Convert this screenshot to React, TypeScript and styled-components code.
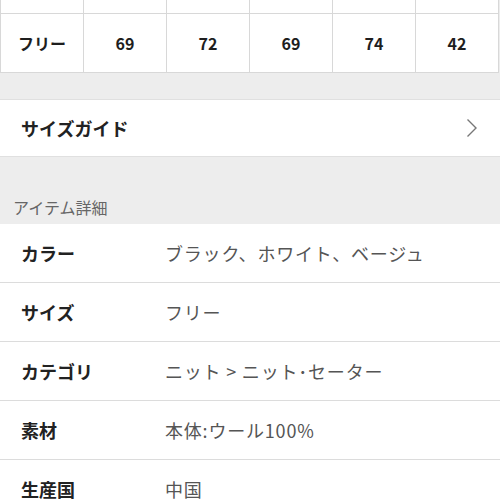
import React from 'react';
import styled, { createGlobalStyle } from 'styled-components';

const GlobalStyle = createGlobalStyle`
  html, body {
    margin: 0;
    padding: 0;
    background: #ededed;
    font-family: "Noto Sans CJK JP", "Noto Sans", sans-serif;
    -webkit-font-smoothing: antialiased;
  }
`;

const StyledPage = styled.div`
  width: 500px;
  height: 500px;
  overflow: hidden;
  background: #ededed;
  display: flex;
  flex-direction: column;
`;

const StyledSizeTable = styled.div`
  display: grid;
  grid-template-columns: repeat(6, 1fr);
  width: 498px;
  background: #fff;
  border-left: 1px solid #d8d8d8;
  border-bottom: 1px solid #d8d8d8;
`;

const StyledCell = styled.div<{ $height: number }>`
  height: ${(props) => props.$height}px;
  display: flex;
  align-items: center;
  justify-content: center;
  border-right: 1px solid #d8d8d8;
  border-bottom: 1px solid #d8d8d8;
  font-size: 16px;
  font-weight: 700;
  color: #1e1e1e;

  &:nth-last-child(-n + 6) {
    border-bottom: none;
  }
`;

const StyledGap = styled.div<{ $height: number }>`
  height: ${(props) => props.$height}px;
  flex-shrink: 0;
`;

const StyledLinkRow = styled.div`
  height: 56px;
  flex-shrink: 0;
  display: flex;
  align-items: center;
  justify-content: space-between;
  padding: 0 22px 0 21px;
  background: #fff;
  border-top: 1px solid #e0e0e0;
  border-bottom: 1px solid #e0e0e0;
  font-size: 18px;
  font-weight: 700;
  color: #222;
`;

const StyledSectionTitle = styled.div`
  height: 67px;
  flex-shrink: 0;
  display: flex;
  align-items: flex-end;
  padding: 0 0 5px 13px;
  box-sizing: border-box;
  font-size: 16px;
  color: #666;
`;

const StyledDetailList = styled.div`
  background: #fff;
  display: flex;
  flex-direction: column;
`;

const StyledDetailRow = styled.div`
  height: 58px;
  flex-shrink: 0;
  display: flex;
  align-items: center;
  padding-left: 21px;
  border-bottom: 1px solid #dcdcdc;
`;

const StyledLabel = styled.div`
  width: 144px;
  font-size: 18px;
  font-weight: 700;
  color: #222;
`;

const StyledValue = styled.div`
  font-size: 18px;
  letter-spacing: 0.8px;
  color: #555;
`;

const sizes = ['フリー', '69', '72', '69', '74', '42'];

const details = [
  { label: 'カラー', value: 'ブラック、ホワイト、ベージュ' },
  { label: 'サイズ', value: 'フリー' },
  { label: 'カテゴリ', value: 'ニット > ニット･セーター' },
  { label: '素材', value: '本体:ウール100%' },
  { label: '生産国', value: '中国' },
];

const ChevronRight = () => (
  <svg width="12" height="20" viewBox="0 0 12 20" fill="none">
    <path d="M1.5 1.5 L10 10 L1.5 18.5" stroke="#777" strokeWidth="1.4" />
  </svg>
);

const App = () => {
  return (
    <StyledPage>
      <GlobalStyle />
      <StyledSizeTable>
        {sizes.map((_, i) => (
          <StyledCell key={`top-${i}`} $height={13} />
        ))}
        {sizes.map((size, i) => (
          <StyledCell key={`row-${i}`} $height={58}>
            {size}
          </StyledCell>
        ))}
      </StyledSizeTable>
      <StyledGap $height={26} />
      <StyledLinkRow>
        サイズガイド
        <ChevronRight />
      </StyledLinkRow>
      <StyledSectionTitle>アイテム詳細</StyledSectionTitle>
      <StyledDetailList>
        {details.map((detail) => (
          <StyledDetailRow key={detail.label}>
            <StyledLabel>{detail.label}</StyledLabel>
            <StyledValue>{detail.value}</StyledValue>
          </StyledDetailRow>
        ))}
      </StyledDetailList>
    </StyledPage>
  );
};

export default App;
